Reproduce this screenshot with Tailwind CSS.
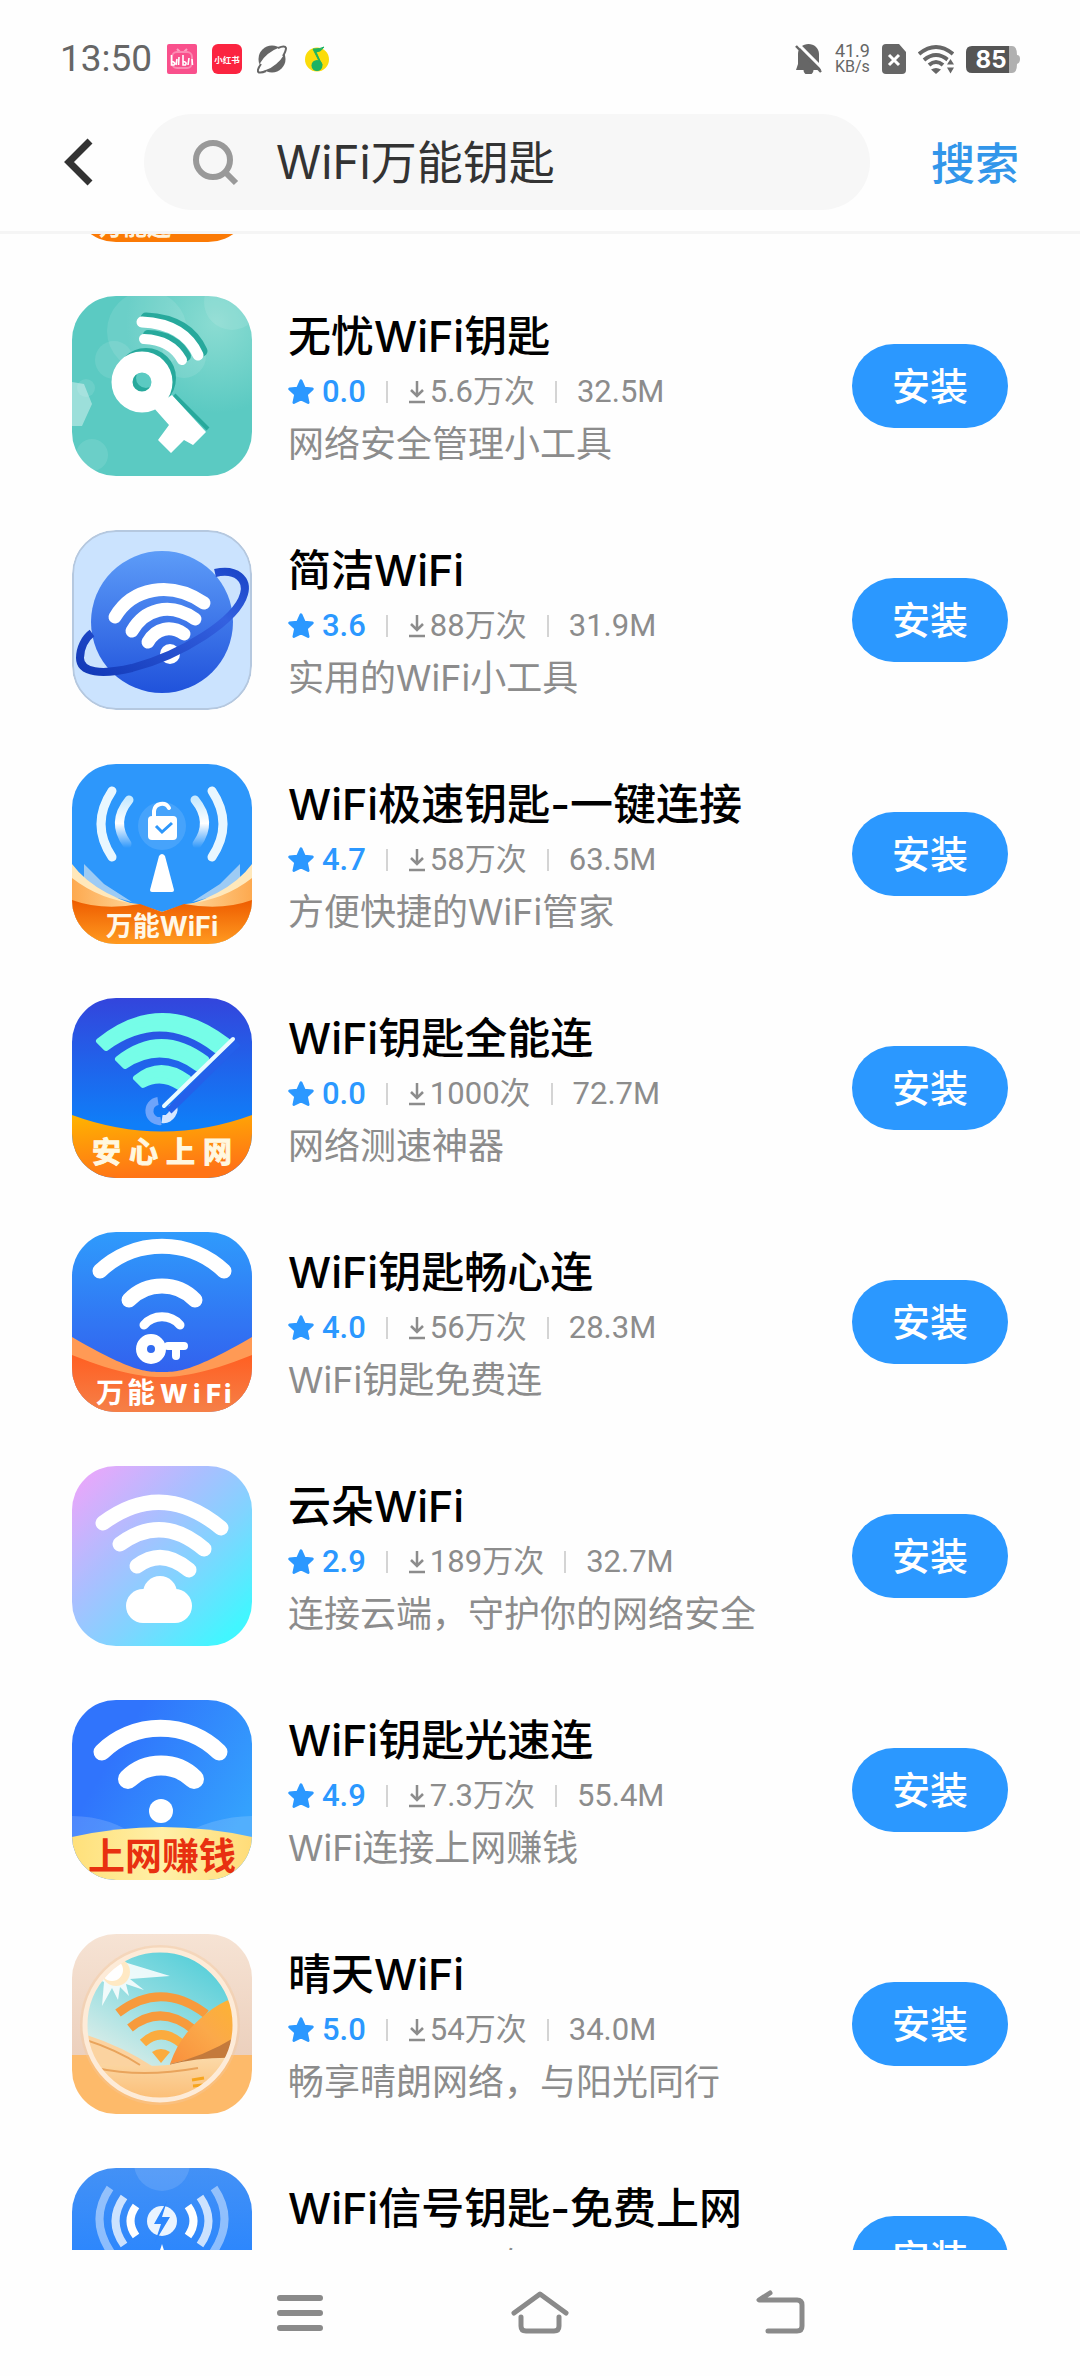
<!DOCTYPE html>
<html lang="zh-Hans">
<head>
    <meta charset="UTF-8">
    <meta name="viewport" content="width=device-width, initial-scale=1.0">
    <title>WiFi万能钥匙 - 搜索</title>
    <script src="https://cdn.jsdelivr.net/npm/@tailwindcss/browser@4"></script>
</head>
<body class="h-screen flex flex-col overflow-hidden bg-[#fefefe] text-black font-['Inter','Noto_Sans_CJK_SC',sans-serif]">

    <!-- 公用图形 -->
    <svg class="absolute size-0" aria-hidden="true">
        <symbol id="star" viewBox="0 0 24 24">
            <path d="M12 1.500l3.100 6.900 7.400.8-5.500 5 1.600 7.600L12 18.400l-6.600 3.400L7 14.200l-5.500-5 7.400-.8z" fill="#2b98ff" stroke="#2b98ff" stroke-width="2.500" stroke-linejoin="round"/>
        </symbol>
        <symbol id="download" viewBox="0 0 18 24">
            <path d="M9 1v15M3 10l6 6 6-6M1 22h16" fill="none" stroke="#8c8c8c" stroke-width="2.500"/>
        </symbol>
    </svg>

    <!-- 状态栏 -->
    <div class="h-[114px] shrink-0 flex items-center justify-between pt-1 px-[60px] text-[#666]">
        <div class="flex items-center gap-[15px]">
            <span class="font-['Roboto',sans-serif] text-[37px] leading-10">13:50</span>
            <svg class="size-[30px]" viewBox="0 0 30 30">
                <rect width="30" height="30" rx="2" fill="#f9508c"/>
                <path d="M10 5l3 3M20 5l-3 3" stroke="#fba3c2" stroke-width="2"/>
                <rect x="5" y="8" width="20" height="16" rx="5" fill="none" stroke="#fb8ab2" stroke-width="2"/>
                <path d="M4.500 11v10h2.500q2-2.500-2.500-4M10 15l-1 6M12 13l-.5 8M16 11v10h2.500q2-2.500-2.500-4M22 14l-1 7M25 15l.5 6" fill="none" stroke="#fff" stroke-width="1.600"/>
            </svg>
            <svg class="size-[30px]" viewBox="0 0 30 30">
                <rect width="30" height="30" rx="6" fill="#fb2440"/>
                <text x="15" y="18.500" text-anchor="middle" font-size="8.500" font-weight="700" fill="#fff">小红书</text>
            </svg>
            <svg class="size-[30px]" viewBox="0 0 30 30">
                <circle cx="15" cy="15" r="13.500" fill="#666"/>
                <ellipse cx="15" cy="15" rx="16" ry="6.500" transform="rotate(-40 15 15)" fill="#fefefe"/>
                <path d="M4 20Q-1 27 2 28.500Q5 29 9 27M21 4Q28 1 29 4Q29 7 26 12" fill="none" stroke="#666" stroke-width="2"/>
            </svg>
            <svg class="size-[30px]" viewBox="0 0 30 30">
                <circle cx="15" cy="15.500" r="12" fill="#fbdc0a"/>
                <circle cx="15" cy="21.500" r="5.500" fill="#1db363"/>
                <path d="M20 21L14 8q5 0 8-5-3 2-11 2l6 12z" fill="#1db363" stroke="#1db363"/>
            </svg>
        </div>
        <div class="flex items-center gap-3">
            <svg class="w-[28px] h-[30px]" viewBox="0 0 28 30">
                <path d="M13.500 0C19 0 24 4 24 10v10l2 6h-7.500a5 5 0 0 1-10 0H1l2-6V10C3 4 8 0 13.500 0z" fill="#666"/>
                <path d="M1-2L29 26" stroke="#fefefe" stroke-width="3"/>
                <path d="M1 2L26 28" stroke="#666" stroke-width="2.500"/>
            </svg>
            <span class="flex flex-col items-center font-['Roboto',sans-serif] text-[18px] leading-4"><span>41.9</span><span class="text-base leading-4">KB/s</span></span>
            <svg class="w-6 h-[30px]" viewBox="0 0 24 30">
                <path d="M4 0h13l7 8v18a4 4 0 0 1-4 4H4a4 4 0 0 1-4-4V4a4 4 0 0 1 4-4z" fill="#666"/>
                <path d="M7 11l10 10M17 11L7 21" stroke="#fff" stroke-width="3"/>
            </svg>
            <svg class="w-9 h-[30px]" viewBox="0 0 36 30">
                <g fill="none" stroke="#666" stroke-width="4">
                    <path d="M1 10Q18-4 35 10M6 16Q18 6 30 16M11 21Q18 15 25 21"/>
                </g>
                <path d="M18 30l-5-4.500q5-3 10 0z" fill="#666"/>
                <path d="M32 12l6 9-6 11-6-11z" fill="#fefefe"/>
                <path d="M32.500 15l3.500 5.500h-7zM32.500 29.500l3.500-6h-7z" fill="#666"/>
            </svg>
            <svg class="w-[54px] h-[27px]" viewBox="0 0 54 27">
                <path d="M43 0h3q5 0 5 9 3 0 3 4t-3 5q0 9-5 9h-3z" fill="#b0b0b0"/>
                <path d="M6 0h37v27H6q-6 0-6-6V6q0-6 6-6z" fill="#555"/>
                <text x="25" y="22" text-anchor="middle" font-size="24" font-weight="700" fill="#fff">85</text>
            </svg>
        </div>
    </div>

    <!-- 搜索栏 -->
    <header class="h-[120px] shrink-0 flex items-start border-b-3 border-[#f5f5f5] pl-[60px]">
        <button type="button" aria-label="返回" class="h-24 w-[84px] flex items-center">
            <svg class="w-9 h-12" viewBox="0 0 36 48"><path d="M30 3L9 24l21 21" fill="none" stroke="#333" stroke-width="7"/></svg>
        </button>
        <label for="keyword" class="flex-1 min-w-0 h-24 flex items-center gap-9 rounded-full bg-[#f7f7f7] pl-12">
            <svg class="size-12 shrink-0" viewBox="0 0 48 48"><circle cx="21" cy="22" r="17" fill="none" stroke="#999" stroke-width="6"/><path d="M33 34l11 11" stroke="#999" stroke-width="6"/></svg>
            <input id="keyword" type="text" value="WiFi万能钥匙" class="flex-1 min-w-0 bg-transparent text-[46px] leading-14 text-[#333] outline-none">
        </label>
        <button type="button" class="h-24 w-[210px] pt-1 text-[44px] font-medium text-[#3296ea]">搜索</button>
    </header>

    <!-- 搜索结果 -->
    <main class="flex-1 min-h-0 overflow-hidden">
        <ul class="-mt-[172px]">
            <li class="h-[207px] px-[72px]">
                <svg class="size-[180px] rounded-[44px]" viewBox="0 0 180 180">
                    <rect width="180" height="180" fill="#fb7a05"/>
                    <text x="27" y="173" font-size="24" font-weight="700" fill="#fff3df">万能连</text>
                </svg>
            </li>

            <li class="flex gap-9 px-[72px] py-[27px]">
                <svg class="size-[180px] shrink-0 rounded-[44px]" viewBox="0 0 180 180">
                    <defs>
                        <radialGradient id="g1" cx=".8" cy=".15" r=".5"><stop stop-color="#8bdcd2"/><stop offset="1" stop-color="#5bcac2"/></radialGradient>
                    </defs>
                    <rect width="180" height="180" fill="url(#g1)"/>
                    <g fill="#fff" fill-opacity=".1">
                        <circle cx="75" cy="35" r="40"/><circle cx="112" cy="60" r="22"/><circle cx="42" cy="64" r="19"/><circle cx="160" cy="6" r="28"/>
                        <circle cx="20" cy="159" r="16"/><circle cx="14" cy="92" r="9"/>
                    </g>
                    <path d="M0 86l12 2 8 20-10 22H0z" fill="#fff" fill-opacity=".4"/>
                    <g transform="translate(4 -4)" fill="none" stroke="#27a99c">
                        <path d="M70 26Q112 28 126 59" stroke-width="11" stroke-linecap="round"/>
                        <path d="M72 43Q99 44 110 64" stroke-width="10" stroke-linecap="round"/>
                        <circle cx="70" cy="86" r="20" stroke-width="20"/>
                        <path d="M98 103l34 34" stroke-width="4"/>
                    </g>
                    <path d="M70 26Q112 28 126 59" fill="none" stroke="#fff" stroke-width="11" stroke-linecap="round"/>
                    <path d="M72 43Q99 44 110 64" fill="none" stroke="#fff" stroke-width="10" stroke-linecap="round"/>
                    <circle cx="70" cy="86" r="20" fill="none" stroke="#fff" stroke-width="21"/>
                    <path d="M100 99l34 37-13 13-9-5-13 13-13-13 11-15-16-18z" fill="#fff"/>
                </svg>
                <div class="flex-1 min-w-0 pt-3">
                    <h2 class="text-[43px] leading-14 font-medium">无忧WiFi钥匙</h2>
                    <p class="mt-1 flex items-center gap-5 h-12 font-['Roboto','Noto_Sans_CJK_SC',sans-serif] text-[31px] text-[#8c8c8c]">
                        <span class="flex items-center gap-2 font-medium text-[#2b98ff]"><svg class="size-[26px]"><use href="#star"/></svg>0.0</span>
                        <span class="w-0.5 h-[22px] bg-[#d4d4d4]"></span>
                        <span class="flex items-center gap-1"><svg class="w-[18px] h-6"><use href="#download"/></svg>5.6万次</span>
                        <span class="w-0.5 h-[22px] bg-[#d4d4d4]"></span>
                        <span>32.5M</span>
                    </p>
                    <p class="mt-1 text-[36px] leading-12 text-[#8c8c8c]">网络安全管理小工具</p>
                </div>
                <button type="button" class="self-center w-[156px] h-[84px] rounded-full bg-[#2b98ff] text-[38px] font-medium text-white">安装</button>
            </li>

            <li class="flex gap-9 px-[72px] py-[27px]">
                <svg class="size-[180px] shrink-0 rounded-[44px]" viewBox="0 0 180 180">
                    <defs>
                        <linearGradient id="g2" x2="0" y2="1"><stop stop-color="#5d9cf8"/><stop offset="1" stop-color="#2052db"/></linearGradient>
                        <linearGradient id="g2r" x1="1" y1="0" x2="0" y2="1"><stop stop-color="#1a45c8"/><stop offset=".3" stop-color="#3461e0"/><stop offset="1" stop-color="#1239b8"/></linearGradient>
                    </defs>
                    <rect x="1" y="1" width="178" height="178" rx="43" fill="#cbe3fe" stroke="#b5c8df" stroke-width="2"/>
                    <circle cx="90" cy="92" r="71" fill="url(#g2)"/>
                    <g fill="none" stroke="#fff" stroke-linecap="round" stroke-width="13">
                        <path d="M43 87C60 58 98 50 132 73"/>
                        <path d="M60 101C72 80 97 71 123 89"/>
                        <path d="M76 112C84 98 99 95 112 104"/>
                    </g>
                    <circle cx="98" cy="124" r="10" fill="#fff"/>
                    <path d="M143 43C165 38 176 50 172 64C165 90 110 125 60 138C30 145 8 143 8 128C8 118 13 108 20 103" fill="none" stroke="url(#g2r)" stroke-width="8"/>
                </svg>
                <div class="flex-1 min-w-0 pt-3">
                    <h2 class="text-[43px] leading-14 font-medium">简洁WiFi</h2>
                    <p class="mt-1 flex items-center gap-5 h-12 font-['Roboto','Noto_Sans_CJK_SC',sans-serif] text-[31px] text-[#8c8c8c]">
                        <span class="flex items-center gap-2 font-medium text-[#2b98ff]"><svg class="size-[26px]"><use href="#star"/></svg>3.6</span>
                        <span class="w-0.5 h-[22px] bg-[#d4d4d4]"></span>
                        <span class="flex items-center gap-1"><svg class="w-[18px] h-6"><use href="#download"/></svg>88万次</span>
                        <span class="w-0.5 h-[22px] bg-[#d4d4d4]"></span>
                        <span>31.9M</span>
                    </p>
                    <p class="mt-1 text-[36px] leading-12 text-[#8c8c8c]">实用的WiFi小工具</p>
                </div>
                <button type="button" class="self-center w-[156px] h-[84px] rounded-full bg-[#2b98ff] text-[38px] font-medium text-white">安装</button>
            </li>

            <li class="flex gap-9 px-[72px] py-[27px]">
                <svg class="size-[180px] shrink-0 rounded-[44px]" viewBox="0 0 180 180">
                    <defs>
                        <linearGradient id="g3" x2="0" y2="1"><stop stop-color="#ee5c00"/><stop offset="1" stop-color="#ff9a20"/></linearGradient>
                        <linearGradient id="g3a" gradientUnits="userSpaceOnUse" x1="0" y1="35" x2="0" y2="84"><stop stop-color="#c8eaff"/><stop offset=".5" stop-color="#fff"/><stop offset="1" stop-color="#fff" stop-opacity="0"/></linearGradient>
                        <linearGradient id="g3b" x2="1" y2="0"><stop stop-color="#fda94f"/><stop offset=".5" stop-color="#ffe6b4"/><stop offset="1" stop-color="#fda94f"/></linearGradient>
                    </defs>
                    <rect width="180" height="180" fill="#2d97fb"/>
                    <circle cx="90" cy="62" r="24" fill="#fff" fill-opacity=".12"/>
                    <path d="M12 100l20 20 28 18-30-8-18-12zM168 100l-20 20-28 18 30-8 18-12z" fill="#b9d8f2" fill-opacity=".8"/>
                    <path d="M0 100Q25 134 90 148Q155 134 180 100V180H0z" fill="#ffe8bb"/>
                    <path d="M0 114Q28 136 66 140L90 148L114 140Q152 136 180 114V180H0z" fill="url(#g3b)"/>
                    <path d="M0 136Q30 147 68 140L90 148L112 140Q150 147 180 136V180H0z" fill="url(#g3)"/>
                    <g fill="none" stroke-width="9" stroke-linecap="round">
                        <path d="M40 27Q18 60 40 93M140 27Q162 60 140 93" stroke="#e9f7ff"/>
                        <path d="M57 36Q39 58 55 80M123 36Q141 58 125 80" stroke="url(#g3a)"/>
                    </g>
                    <rect x="76" y="52" width="29" height="24" rx="4" fill="#fff"/>
                    <path d="M82 54V47a8 8 0 0 1 15-3" fill="none" stroke="#fff" stroke-width="4" stroke-linecap="round"/>
                    <path d="M84 62l6 6 10-9" fill="none" stroke="#2d97fb" stroke-width="3"/>
                    <path d="M87 92q3-4 6 0l9 34q0 2-2 2H80q-2 0-2-2z" fill="#fff"/>
                    <text x="90" y="172" text-anchor="middle" font-size="27" font-weight="700" fill="#fff8e8">万能WiFi</text>
                </svg>
                <div class="flex-1 min-w-0 pt-3">
                    <h2 class="text-[43px] leading-14 font-medium">WiFi极速钥匙-一键连接</h2>
                    <p class="mt-1 flex items-center gap-5 h-12 font-['Roboto','Noto_Sans_CJK_SC',sans-serif] text-[31px] text-[#8c8c8c]">
                        <span class="flex items-center gap-2 font-medium text-[#2b98ff]"><svg class="size-[26px]"><use href="#star"/></svg>4.7</span>
                        <span class="w-0.5 h-[22px] bg-[#d4d4d4]"></span>
                        <span class="flex items-center gap-1"><svg class="w-[18px] h-6"><use href="#download"/></svg>58万次</span>
                        <span class="w-0.5 h-[22px] bg-[#d4d4d4]"></span>
                        <span>63.5M</span>
                    </p>
                    <p class="mt-1 text-[36px] leading-12 text-[#8c8c8c]">方便快捷的WiFi管家</p>
                </div>
                <button type="button" class="self-center w-[156px] h-[84px] rounded-full bg-[#2b98ff] text-[38px] font-medium text-white">安装</button>
            </li>

            <li class="flex gap-9 px-[72px] py-[27px]">
                <svg class="size-[180px] shrink-0 rounded-[44px]" viewBox="0 0 180 180">
                    <defs>
                        <linearGradient id="g4" x2="0" y2="1"><stop stop-color="#3345dc"/><stop offset=".7" stop-color="#0f7ef8"/></linearGradient>
                        <linearGradient id="g4o" x2=".3" y2="1"><stop stop-color="#ffb400"/><stop offset="1" stop-color="#ff7416"/></linearGradient>
                    </defs>
                    <rect width="180" height="180" fill="url(#g4)"/>
                    <g fill="#76fde8" stroke="#76fde8" stroke-width="6" stroke-linejoin="round">
                        <path d="M27 43Q90-7 155 43L144 52Q89 10 34 50z"/>
                        <path d="M46 61Q89 27 134 61L125 70Q89 44 53 68z"/>
                        <path d="M64 80Q89 60 116 80L107 89Q89 77 71 87z"/>
                    </g>
                    <path d="M86 103a10 10 0 0 0 3 20" fill="none" stroke="#6ea4fb" stroke-width="8"/>
                    <path d="M90 121a10 10 0 0 0 10-15" fill="none" stroke="#d6e6ff" stroke-width="8"/>
                    <path d="M97 113L166 45" stroke="#2460ea" stroke-width="7"/>
                    <path d="M92 108L161 41" stroke="#e8fbff" stroke-width="4" stroke-linecap="round"/>
                    <path d="M0 117Q90 150 180 117V180H0z" fill="url(#g4o)"/>
                    <text x="20 57 94 131" y="165" font-size="29" font-weight="700" fill="#fff8e0" stroke="#fff8e0">安心上网</text>
                </svg>
                <div class="flex-1 min-w-0 pt-3">
                    <h2 class="text-[43px] leading-14 font-medium">WiFi钥匙全能连</h2>
                    <p class="mt-1 flex items-center gap-5 h-12 font-['Roboto','Noto_Sans_CJK_SC',sans-serif] text-[31px] text-[#8c8c8c]">
                        <span class="flex items-center gap-2 font-medium text-[#2b98ff]"><svg class="size-[26px]"><use href="#star"/></svg>0.0</span>
                        <span class="w-0.5 h-[22px] bg-[#d4d4d4]"></span>
                        <span class="flex items-center gap-1"><svg class="w-[18px] h-6"><use href="#download"/></svg>1000次</span>
                        <span class="w-0.5 h-[22px] bg-[#d4d4d4]"></span>
                        <span>72.7M</span>
                    </p>
                    <p class="mt-1 text-[36px] leading-12 text-[#8c8c8c]">网络测速神器</p>
                </div>
                <button type="button" class="self-center w-[156px] h-[84px] rounded-full bg-[#2b98ff] text-[38px] font-medium text-white">安装</button>
            </li>

            <li class="flex gap-9 px-[72px] py-[27px]">
                <svg class="size-[180px] shrink-0 rounded-[44px]" viewBox="0 0 180 180">
                    <defs>
                        <linearGradient id="g5" x2="0" y2="1"><stop stop-color="#2f9bfc"/><stop offset=".8" stop-color="#3260ee"/></linearGradient>
                        <linearGradient id="g5o" x2="0" y2="1"><stop stop-color="#ff5f22"/><stop offset="1" stop-color="#f58048"/></linearGradient>
                    </defs>
                    <rect width="180" height="180" fill="url(#g5)"/>
                    <g fill="none" stroke="#fff" stroke-linecap="round">
                        <path d="M28 39A90 90 0 0 1 152 39" stroke-width="15"/>
                        <path d="M57 68A46 46 0 0 1 123 68" stroke-width="15"/>
                        <path d="M72 93A24 24 0 0 1 108 93" stroke-width="9"/>
                        <path d="M96 114H112M104 114V124" stroke-width="8"/>
                        <circle cx="79" cy="117" r="9.500" stroke-width="11"/>
                    </g>
                    <path d="M0 105C60 140 75 140 90 140S120 140 180 105V180H0z" fill="#ff9a55"/>
                    <path d="M0 123C50 143 75 145 90 145S130 143 180 123V180H0z" fill="url(#g5o)"/>
                    <text x="24 55" y="171" font-size="28" font-weight="700" fill="#fff">万能<tspan x="88 121 134 152" font-size="26" font-weight="800">WiFi</tspan></text>
                </svg>
                <div class="flex-1 min-w-0 pt-3">
                    <h2 class="text-[43px] leading-14 font-medium">WiFi钥匙畅心连</h2>
                    <p class="mt-1 flex items-center gap-5 h-12 font-['Roboto','Noto_Sans_CJK_SC',sans-serif] text-[31px] text-[#8c8c8c]">
                        <span class="flex items-center gap-2 font-medium text-[#2b98ff]"><svg class="size-[26px]"><use href="#star"/></svg>4.0</span>
                        <span class="w-0.5 h-[22px] bg-[#d4d4d4]"></span>
                        <span class="flex items-center gap-1"><svg class="w-[18px] h-6"><use href="#download"/></svg>56万次</span>
                        <span class="w-0.5 h-[22px] bg-[#d4d4d4]"></span>
                        <span>28.3M</span>
                    </p>
                    <p class="mt-1 text-[36px] leading-12 text-[#8c8c8c]">WiFi钥匙免费连</p>
                </div>
                <button type="button" class="self-center w-[156px] h-[84px] rounded-full bg-[#2b98ff] text-[38px] font-medium text-white">安装</button>
            </li>

            <li class="flex gap-9 px-[72px] py-[27px]">
                <svg class="size-[180px] shrink-0 rounded-[44px]" viewBox="0 0 180 180">
                    <defs>
                        <linearGradient id="g6" x2="1" y2="1"><stop offset=".08" stop-color="#e4a9fb"/><stop offset=".38" stop-color="#a9bfff"/><stop offset=".6" stop-color="#82d3ff"/><stop offset=".9" stop-color="#42f6ff"/></linearGradient>
                    </defs>
                    <rect width="180" height="180" fill="url(#g6)"/>
                    <g fill="none" stroke="#fff" stroke-linecap="round" stroke-width="15">
                        <path d="M31 57Q90 13 149 62"/>
                        <path d="M48 78Q90 47 132 83"/>
                        <path d="M65 100Q90 81 117 104"/>
                    </g>
                    <circle cx="88" cy="127" r="17" fill="#fff"/>
                    <rect x="54" y="123" width="66" height="34" rx="17" fill="#fff"/>
                </svg>
                <div class="flex-1 min-w-0 pt-3">
                    <h2 class="text-[43px] leading-14 font-medium">云朵WiFi</h2>
                    <p class="mt-1 flex items-center gap-5 h-12 font-['Roboto','Noto_Sans_CJK_SC',sans-serif] text-[31px] text-[#8c8c8c]">
                        <span class="flex items-center gap-2 font-medium text-[#2b98ff]"><svg class="size-[26px]"><use href="#star"/></svg>2.9</span>
                        <span class="w-0.5 h-[22px] bg-[#d4d4d4]"></span>
                        <span class="flex items-center gap-1"><svg class="w-[18px] h-6"><use href="#download"/></svg>189万次</span>
                        <span class="w-0.5 h-[22px] bg-[#d4d4d4]"></span>
                        <span>32.7M</span>
                    </p>
                    <p class="mt-1 text-[36px] leading-12 text-[#8c8c8c]">连接云端，守护你的网络安全</p>
                </div>
                <button type="button" class="self-center w-[156px] h-[84px] rounded-full bg-[#2b98ff] text-[38px] font-medium text-white">安装</button>
            </li>

            <li class="flex gap-9 px-[72px] py-[27px]">
                <svg class="size-[180px] shrink-0 rounded-[44px]" viewBox="0 0 180 180">
                    <defs>
                        <linearGradient id="g7" x2="1" y2=".6"><stop offset=".3" stop-color="#3074fc"/><stop offset="1" stop-color="#34a2fd"/></linearGradient>
                        <linearGradient id="g7y" x2="1" y2="0"><stop stop-color="#ffe07a"/><stop offset=".5" stop-color="#fff0a8"/><stop offset="1" stop-color="#ffdc78"/></linearGradient>
                    </defs>
                    <rect width="180" height="180" fill="url(#g7)"/>
                    <path d="M0 116Q40 116 70 140H0zM180 116Q140 116 100 140H180z" fill="#fff" fill-opacity=".15"/>
                    <g fill="none" stroke="#fff" stroke-linecap="round">
                        <path d="M30 52A84 84 0 0 1 147 52" stroke-width="17"/>
                        <path d="M56 79A47 47 0 0 1 122 79" stroke-width="20"/>
                    </g>
                    <circle cx="89" cy="111" r="12" fill="#fff"/>
                    <path d="M0 137Q90 117 180 137V180H0z" fill="url(#g7y)"/>
                    <text x="90" y="170" text-anchor="middle" font-size="37" font-weight="700" fill="#e83010">上网赚钱</text>
                </svg>
                <div class="flex-1 min-w-0 pt-3">
                    <h2 class="text-[43px] leading-14 font-medium">WiFi钥匙光速连</h2>
                    <p class="mt-1 flex items-center gap-5 h-12 font-['Roboto','Noto_Sans_CJK_SC',sans-serif] text-[31px] text-[#8c8c8c]">
                        <span class="flex items-center gap-2 font-medium text-[#2b98ff]"><svg class="size-[26px]"><use href="#star"/></svg>4.9</span>
                        <span class="w-0.5 h-[22px] bg-[#d4d4d4]"></span>
                        <span class="flex items-center gap-1"><svg class="w-[18px] h-6"><use href="#download"/></svg>7.3万次</span>
                        <span class="w-0.5 h-[22px] bg-[#d4d4d4]"></span>
                        <span>55.4M</span>
                    </p>
                    <p class="mt-1 text-[36px] leading-12 text-[#8c8c8c]">WiFi连接上网赚钱</p>
                </div>
                <button type="button" class="self-center w-[156px] h-[84px] rounded-full bg-[#2b98ff] text-[38px] font-medium text-white">安装</button>
            </li>

            <li class="flex gap-9 px-[72px] py-[27px]">
                <svg class="size-[180px] shrink-0 rounded-[44px]" viewBox="0 0 180 180">
                    <defs>
                        <linearGradient id="g8" x1=".8" y1="0" x2=".3" y2=".8"><stop stop-color="#3fc9d6"/><stop offset=".5" stop-color="#8adbe0"/><stop offset="1" stop-color="#e4efe9"/></linearGradient>
                        <linearGradient id="g8b" x2="0" y2="1"><stop stop-color="#f6e3d4"/><stop offset="1" stop-color="#ecd0bd"/></linearGradient>
                        <linearGradient id="g8s" x2="0" y2="1"><stop stop-color="#fbd9a8"/><stop offset="1" stop-color="#fbb566"/></linearGradient>
                        <linearGradient id="g8d" x1="0" y1="1" x2="1" y2="0"><stop stop-color="#f98f3c"/><stop offset=".5" stop-color="#fba94a"/><stop offset="1" stop-color="#fdb52e"/></linearGradient>
                        <clipPath id="c8"><circle cx="88" cy="91" r="74"/></clipPath>
                    </defs>
                    <rect width="180" height="121" fill="url(#g8b)"/>
                    <rect y="121" width="180" height="59" fill="#fdba6a"/>
                    <circle cx="88" cy="91" r="80" fill="#f6c79c" fill-opacity=".4"/>
                    <g clip-path="url(#c8)">
                        <rect width="180" height="180" fill="url(#g8)"/>
                        <path d="M52 28L98 42L58 45L72 56L54 50L57 62L48 53L46 66L40 54L30 72L32 48L14 40L30 30L34 14L46 20z" fill="#fff" fill-opacity=".85"/>
                        <circle cx="44" cy="38" r="14" fill="#ffe9c4"/>
                        <circle cx="40" cy="36" r="11" fill="#fff"/>
                        <g fill="none" stroke="#f79a3c" stroke-width="9">
                            <path d="M46 79Q89 46 134 80"/>
                            <path d="M58 94Q89 69 122 96"/>
                            <path d="M71 109Q89 92 110 110" stroke="#fbab3e"/>
                        </g>
                        <path d="M80 118q9-6 18 0l-9 11z" fill="#fbab3e"/>
                        <path d="M12 100Q50 112 80 132H12z" fill="#fbd3a0"/>
                        <path d="M14 106Q45 116 68 131" fill="none" stroke="#e9a45c" stroke-width="2"/>
                        <path d="M98 130Q108 100 134 80Q150 66 170 62V112z" fill="url(#g8d)"/>
                        <path d="M98 130Q135 122 168 100V140H98z" fill="#c47a3c"/>
                        <path d="M10 128Q60 134 96 131Q130 122 170 124V180H10z" fill="url(#g8s)"/>
                        <path d="M24 134Q70 144 126 134" fill="none" stroke="#e9a45c" stroke-width="2"/>
                        <path d="M120 146l12-2M121 152l10-1" stroke="#f6a51e" stroke-width="3"/>
                    </g>
                    <circle cx="88" cy="91" r="75" fill="none" stroke="#fdebd8" stroke-width="5"/>
                </svg>
                <div class="flex-1 min-w-0 pt-3">
                    <h2 class="text-[43px] leading-14 font-medium">晴天WiFi</h2>
                    <p class="mt-1 flex items-center gap-5 h-12 font-['Roboto','Noto_Sans_CJK_SC',sans-serif] text-[31px] text-[#8c8c8c]">
                        <span class="flex items-center gap-2 font-medium text-[#2b98ff]"><svg class="size-[26px]"><use href="#star"/></svg>5.0</span>
                        <span class="w-0.5 h-[22px] bg-[#d4d4d4]"></span>
                        <span class="flex items-center gap-1"><svg class="w-[18px] h-6"><use href="#download"/></svg>54万次</span>
                        <span class="w-0.5 h-[22px] bg-[#d4d4d4]"></span>
                        <span>34.0M</span>
                    </p>
                    <p class="mt-1 text-[36px] leading-12 text-[#8c8c8c]">畅享晴朗网络，与阳光同行</p>
                </div>
                <button type="button" class="self-center w-[156px] h-[84px] rounded-full bg-[#2b98ff] text-[38px] font-medium text-white">安装</button>
            </li>

            <li class="flex gap-9 px-[72px] py-[27px]">
                <svg class="size-[180px] shrink-0 rounded-[44px]" viewBox="0 0 180 180">
                    <defs>
                        <linearGradient id="g9" x2="0" y2="1"><stop stop-color="#4391f6"/><stop offset=".5" stop-color="#2b86fd"/></linearGradient>
                    </defs>
                    <rect width="180" height="180" fill="url(#g9)"/>
                    <circle cx="90" cy="-5" r="28" fill="#fff" fill-opacity=".12"/>
                    <g fill="none" stroke="#fff" stroke-width="8">
                        <path d="M38 20Q16 52 40 86M142 20Q164 52 140 86" stroke-opacity=".45"/>
                        <path d="M52 29Q35 53 52 77M128 29Q145 53 128 77" stroke-opacity=".75"/>
                        <path d="M64 38Q53 53 64 68M116 38Q127 53 116 68"/>
                    </g>
                    <circle cx="90" cy="53" r="15" fill="#eaf4ff"/>
                    <path d="M95 33L82 56h7l-6 18 15-25h-8z" fill="#2b86fd"/>
                    <path d="M90 76l16 50H74z" fill="#fff"/>
                </svg>
                <div class="flex-1 min-w-0 pt-3">
                    <h2 class="text-[43px] leading-14 font-medium">WiFi信号钥匙-免费上网</h2>
                    <p class="mt-1 flex items-center gap-5 h-12 font-['Roboto','Noto_Sans_CJK_SC',sans-serif] text-[31px] text-[#8c8c8c]">
                        <span class="flex items-center gap-2 font-medium text-[#2b98ff]"><svg class="size-[26px]"><use href="#star"/></svg>4.7</span>
                        <span class="w-0.5 h-[22px] bg-[#d4d4d4]"></span>
                        <span class="flex items-center gap-1"><svg class="w-[18px] h-6"><use href="#download"/></svg>58万次</span>
                    </p>
                </div>
                <button type="button" class="self-center w-[156px] h-[84px] rounded-full bg-[#2b98ff] text-[38px] font-medium text-white">安装</button>
            </li>
        </ul>
    </main>

    <!-- 系统导航键 -->
    <nav class="h-[126px] shrink-0 w-2/3 mx-auto grid grid-cols-3 items-center justify-items-center">
        <button type="button" aria-label="菜单">
            <svg class="w-[60px] h-12" viewBox="0 0 60 48"><path d="M10 9h40M10 24h40M10 39h40" stroke="#8a8a8a" stroke-width="6" stroke-linecap="round"/></svg>
        </button>
        <button type="button" aria-label="主页">
            <svg class="w-[60px] h-12" viewBox="0 0 60 48"><path d="M4 24L30 5l26 19M11 28v9q0 5 5 5h28q5 0 5-5v-9" fill="none" stroke="#8a8a8a" stroke-width="5" stroke-linecap="round" stroke-linejoin="round"/></svg>
        </button>
        <button type="button" aria-label="后退">
            <svg class="w-[60px] h-12" viewBox="0 0 60 48"><path d="M20 4L9 11H47q5 0 5 5V37q0 5-5 5H18" fill="none" stroke="#8a8a8a" stroke-width="5" stroke-linecap="round" stroke-linejoin="round"/></svg>
        </button>
    </nav>

</body>
</html>
